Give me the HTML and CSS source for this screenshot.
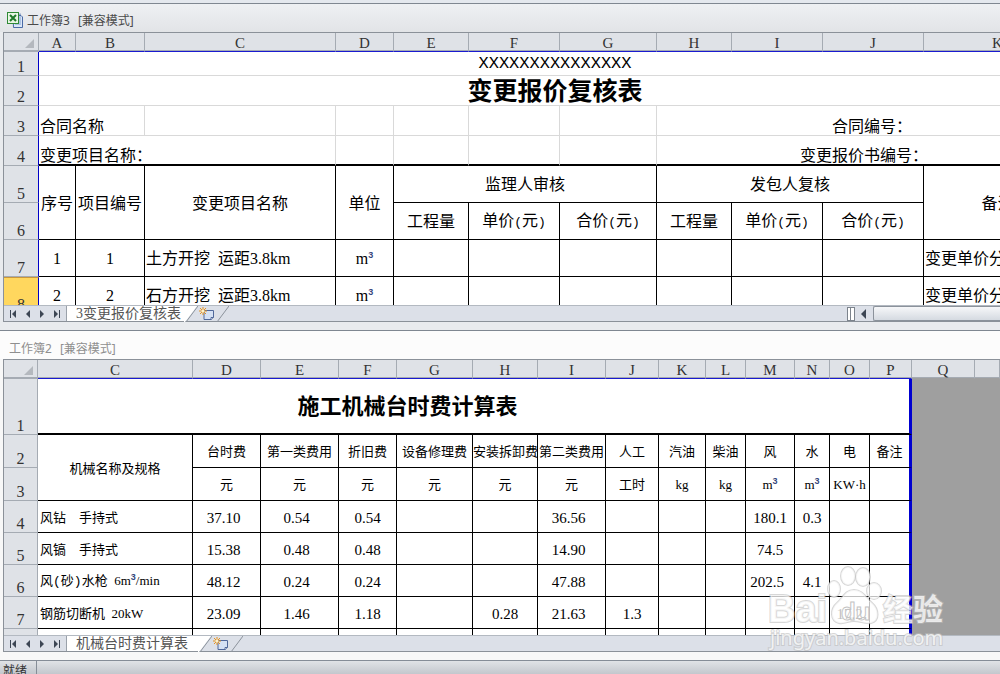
FILE: index.html
```
<!DOCTYPE html>
<html lang="zh-CN">
<head>
    <meta charset="UTF-8">
    <meta name="viewport" content="width=device-width, initial-scale=1.0">
    <title>工作簿3 [兼容模式]</title>
    <link rel="stylesheet" href="styles.css">
</head>
<body>

<section class="workbook active">
    <header class="titlebar">
        <svg class="bookIcon" viewBox="0 0 16 16" width="16" height="16">
            <path d="M6 3.500h8l1.500 1.500v10.500h-9z" fill="#dbe7f8" stroke="#4a6ba6"/>
            <path d="M10 6h4M10 8h4M10 10h4M8 12h6" stroke="#7f9fd0"/>
            <rect x=".5" y=".5" width="11" height="11" fill="#e9f6e4" stroke="#2f8a35"/>
            <path d="M3 3l6 6M9 3l-6 6" stroke="#1f7a2a" stroke-width="2"/>
            <path d="M13 1.500v3" stroke="#4a6ba6"/>
        </svg>
        <span class="bookName">工作簿3</span><span>[兼容模式]</span>
    </header>
    <div class="frame">
        <div class="view">
            <table class="sheet review">
                <colgroup><col><col><col><col><col><col><col><col><col><col><col><col></colgroup>
                <thead>
                    <tr>
                        <th class="corner"><svg viewBox="0 0 9 9" width="9" height="9"><path d="M9 0v9H0z" fill="#b4b8be"/></svg></th>
                        <th>A</th><th>B</th><th>C</th><th>D</th><th>E</th><th>F</th><th>G</th><th>H</th><th>I</th><th>J</th><th>K</th>
                    </tr>
                </thead>
                <tbody>
                    <tr class="plain r24">
                        <th>1</th>
                        <td colspan="11" class="project">XXXXXXXXXXXXXXX</td>
                    </tr>
                    <tr class="plain r30">
                        <th>2</th>
                        <td colspan="11" class="heading">变更报价复核表</td>
                    </tr>
                    <tr class="plain low r30">
                        <th>3</th>
                        <td colspan="2" class="left">合同名称</td><td></td><td></td><td></td><td></td><td></td>
                        <td colspan="4">&emsp;合同编号：</td>
                    </tr>
                    <tr class="plain low last r30">
                        <th>4</th>
                        <td colspan="3" class="left">变更项目名称：</td><td></td><td></td><td></td><td></td>
                        <td colspan="4">变更报价书编号：</td>
                    </tr>
                    <tr class="r37">
                        <th>5</th>
                        <td rowspan="2">序号</td><td rowspan="2">项目编号</td><td rowspan="2">变更项目名称</td><td rowspan="2">单位</td>
                        <td colspan="3">监理人审核</td><td colspan="3">发包人复核</td><td rowspan="2">备注</td>
                    </tr>
                    <tr class="r37">
                        <th>6</th>
                        <td>工程量</td>
                        <td>单价<span class="half">(</span>元<span class="half">)</span></td>
                        <td>合价<span class="half">(</span>元<span class="half">)</span></td>
                        <td>工程量</td>
                        <td>单价<span class="half">(</span>元<span class="half">)</span></td>
                        <td>合价<span class="half">(</span>元<span class="half">)</span></td>
                    </tr>
                    <tr class="r37">
                        <th>7</th>
                        <td>1</td><td>1</td><td class="left">土方开挖&ensp;运距3.8km</td><td>m<sup>3</sup></td>
                        <td></td><td></td><td></td><td></td><td></td><td></td><td class="left">变更单价分析表</td>
                    </tr>
                    <tr class="r37">
                        <th class="current">8</th>
                        <td>2</td><td>2</td><td class="left">石方开挖&ensp;运距3.8km</td><td>m<sup>3</sup></td>
                        <td></td><td></td><td></td><td></td><td></td><td></td><td class="left">变更单价分析表</td>
                    </tr>
                </tbody>
            </table>
        </div>
        <nav class="tabs">
            <div class="arrows">
                <button aria-label="第一张"><svg viewBox="0 0 8 8" width="8" height="8"><path d="M1 0h1v8H1zM7 0v8L3 4z"/></svg></button>
                <button aria-label="上一张"><svg viewBox="0 0 8 8" width="8" height="8"><path d="M6 0v8L2 4z"/></svg></button>
                <button aria-label="下一张"><svg viewBox="0 0 8 8" width="8" height="8"><path d="M2 0v8l4-4z"/></svg></button>
                <button aria-label="最后一张"><svg viewBox="0 0 8 8" width="8" height="8"><path d="M6 0h1v8H6zM1 0v8l4-4z"/></svg></button>
            </div>
            <button class="tab">3变更报价复核表</button>
            <svg class="slant" viewBox="0 0 14 16" width="14" height="16"><path d="M0 0h13L1 16H0z" fill="#fff"/><path d="M14 0L2 16" stroke="#8b929b" fill="none"/></svg>
            <button class="add" aria-label="插入工作表">
                <svg viewBox="0 0 16 14" width="16" height="14"><path d="M5 3.500h9.500v7l-2 2H5z" fill="#d5e1f4" stroke="#50689a"/><path d="M12 12.500v-2h2.500" fill="#fff" stroke="#50689a"/><path d="M4 0v8M0 4h8M1 1l6 6M7 1L1 7" stroke="#e6921e"/><circle cx="4" cy="4" r="1.500" fill="#fff3c8"/></svg>
            </button>
            <svg class="slant" viewBox="0 0 14 16" width="14" height="16"><path d="M14 0L2 16" stroke="#8b929b" fill="none"/></svg>
            <div class="hscroll">
                <span class="split"></span>
                <button class="scrollLeft" aria-label="向左滚动"><svg viewBox="0 0 5 10" width="5" height="10"><path d="M5 0v10L0 5z"/></svg></button>
                <span class="thumb"></span>
            </div>
        </nav>
    </div>
</section>

<section class="workbook inactive">
    <header class="titlebar">
        <span class="bookName">工作簿2</span><span>[兼容模式]</span>
    </header>
    <div class="frame">
        <div class="view">
            <table class="sheet cost">
                <colgroup><col><col><col><col><col><col><col><col><col><col><col><col><col><col><col><col><col></colgroup>
                <thead>
                    <tr>
                        <th class="corner"><svg viewBox="0 0 9 9" width="9" height="9"><path d="M9 0v9H0z" fill="#b4b8be"/></svg></th>
                        <th>C</th><th>D</th><th>E</th><th>F</th><th>G</th><th>H</th><th>I</th><th>J</th><th>K</th><th>L</th><th>M</th><th>N</th><th>O</th><th>P</th>
                        <th class="beyond">Q</th><th class="beyond"></th>
                    </tr>
                </thead>
                <tbody>
                    <tr class="r56">
                        <th>1</th>
                        <td colspan="14" class="heading edge">施工机械台时费计算表</td>
                        <td colspan="2" rowspan="8" class="outside"></td>
                    </tr>
                    <tr class="r33">
                        <th>2</th>
                        <td rowspan="2">机械名称及规格</td><td>台时费</td><td>第一类费用</td><td>折旧费</td><td>设备修理费</td><td>安装拆卸费</td><td>第二类费用</td>
                        <td>人工</td><td>汽油</td><td>柴油</td><td>风</td><td>水</td><td>电</td><td class="edge">备注</td>
                    </tr>
                    <tr class="r33">
                        <th>3</th>
                        <td>元</td><td>元</td><td>元</td><td>元</td><td>元</td><td>元</td>
                        <td>工时</td><td>kg</td><td>kg</td><td>m<sup>3</sup></td><td>m<sup>3</sup></td><td>KW·h</td><td class="edge"></td>
                    </tr>
                    <tr class="r32">
                        <th>4</th>
                        <td class="left">风钻&emsp;手持式</td><td class="num">37.10</td><td class="num">0.54</td><td>0.54</td><td></td><td></td><td class="num">36.56</td>
                        <td></td><td></td><td></td><td>180.1</td><td>0.3</td><td></td><td class="edge"></td>
                    </tr>
                    <tr class="r32">
                        <th>5</th>
                        <td class="left">风镐&emsp;手持式</td><td class="num">15.38</td><td class="num">0.48</td><td>0.48</td><td></td><td></td><td class="num">14.90</td>
                        <td></td><td></td><td></td><td>74.5</td><td></td><td></td><td class="edge"></td>
                    </tr>
                    <tr class="r32">
                        <th>6</th>
                        <td class="left">风<span class="half">(</span>砂<span class="half">)</span>水枪&ensp;6m<sup>3</sup>/min</td><td class="num">48.12</td><td class="num">0.24</td><td>0.24</td><td></td><td></td><td class="num">47.88</td>
                        <td></td><td></td><td></td><td class="num">202.5</td><td>4.1</td><td></td><td class="edge"></td>
                    </tr>
                    <tr class="r32">
                        <th>7</th>
                        <td class="left">钢筋切断机&ensp;20kW</td><td class="num">23.09</td><td class="num">1.46</td><td>1.18</td><td></td><td>0.28</td><td class="num">21.63</td>
                        <td>1.3</td><td></td><td></td><td></td><td></td><td>17.2</td><td class="edge"></td>
                    </tr>
                    <tr class="r32">
                        <th>8</th>
                        <td></td><td></td><td></td><td></td><td></td><td></td><td></td><td></td><td></td><td></td><td></td><td></td><td></td><td class="edge"></td>
                    </tr>
                </tbody>
            </table>
        </div>
        <nav class="tabs">
            <div class="arrows">
                <button aria-label="第一张"><svg viewBox="0 0 8 8" width="8" height="8"><path d="M1 0h1v8H1zM7 0v8L3 4z"/></svg></button>
                <button aria-label="上一张"><svg viewBox="0 0 8 8" width="8" height="8"><path d="M6 0v8L2 4z"/></svg></button>
                <button aria-label="下一张"><svg viewBox="0 0 8 8" width="8" height="8"><path d="M2 0v8l4-4z"/></svg></button>
                <button aria-label="最后一张"><svg viewBox="0 0 8 8" width="8" height="8"><path d="M6 0h1v8H6zM1 0v8l4-4z"/></svg></button>
            </div>
            <button class="tab wide">机械台时费计算表</button>
            <svg class="slant" viewBox="0 0 14 16" width="14" height="16"><path d="M0 0h13L1 16H0z" fill="#fff"/><path d="M14 0L2 16" stroke="#8b929b" fill="none"/></svg>
            <button class="add" aria-label="插入工作表">
                <svg viewBox="0 0 16 14" width="16" height="14"><path d="M5 3.500h9.500v7l-2 2H5z" fill="#d5e1f4" stroke="#50689a"/><path d="M12 12.500v-2h2.500" fill="#fff" stroke="#50689a"/><path d="M4 0v8M0 4h8M1 1l6 6M7 1L1 7" stroke="#e6921e"/><circle cx="4" cy="4" r="1.500" fill="#fff3c8"/></svg>
            </button>
            <svg class="slant" viewBox="0 0 14 16" width="14" height="16"><path d="M14 0L2 16" stroke="#8b929b" fill="none"/></svg>
        </nav>
    </div>
</section>

<footer class="status"><span>就绪</span></footer>

<!-- 水印 -->
<svg class="watermark" viewBox="0 0 184 90" width="184" height="90">
    <g class="mark">
        <ellipse cx="68" cy="25" rx="6" ry="8"/>
        <ellipse cx="82" cy="12" rx="7" ry="9"/>
        <ellipse cx="97" cy="13" rx="7" ry="9"/>
        <ellipse cx="108" cy="27" rx="7" ry="8"/>
        <path d="M88 26c-9 0-11 8-17 13-7 6-7 18 2 20 6 1 9-2 15-2s11 3 17 2c9-2 8-14 1-20-6-5-9-13-18-13z"/>
        <text class="bai" x="2" y="58">Bai</text>
        <text class="cn" x="117" y="56">经验</text>
        <text class="url" x="4" y="81">jingyan.baidu.com</text>
    </g>
    <text class="du" x="75" y="56">du</text>
</svg>

</body>
</html>
```
FILE: styles.css
```
* {
    box-sizing: border-box;
}
body {
    margin: 0;
    padding-top: 3px;
    height: 100vh;
    display: flex;
    flex-direction: column;
    overflow: hidden;
    position: relative;
    background: #e4e8ee;
    font-family: "Liberation Serif", "Noto Sans CJK SC", serif;
    color: #000;
}
button {
    border: none;
    padding: 0;
    background: none;
    font-family: inherit;
    cursor: pointer;
}
svg {
    display: block;
}

/* 工作簿窗口 */
.workbook {
    min-height: 0;
    display: flex;
    flex-direction: column;
    border-top: 1px solid #7f8791;
    padding-bottom: 8px;
}
.active {
    flex: 1 1 327px;
    background: #e9ebee;
}
.inactive {
    flex: 1 1 330px;
    background: #f8f8f8;
}
.titlebar {
    flex: none;
    height: 28px;
    padding: 4px 7px 0;
    display: flex;
    align-items: center;
    gap: 4px;
    font: 12px "Noto Sans", "Noto Sans CJK SC", sans-serif;
    color: #4a4a4a;
}
.active .titlebar {
    background: linear-gradient(#eef0f3, #e2e4e7);
}
.inactive .titlebar {
    background: #fcfcfc;
    padding: 6px 9px 0;
    color: #8f8f8f;
}
.bookName {
    margin-right: 4px;
}
.frame {
    flex: 1;
    min-height: 0;
    margin-left: 3px;
    display: flex;
    flex-direction: column;
    border: 1px solid #8b9199;
    border-right: none;
}
.view {
    flex: 1;
    min-height: 0;
    overflow: hidden;
    background: #fff;
}

/* 表格 */
.sheet {
    width: 100%;
    table-layout: fixed;
    border-spacing: 0;
    font-size: 16px;
    line-height: 20px;
}
.sheet th {
    padding: 0;
    font-weight: normal;
    font-size: 15px;
    line-height: 16px;
    color: #333;
    background: #dfe2e7;
    border-right: 1px solid #a5abb3;
    border-bottom: 1px solid #a5abb3;
}
.sheet thead th {
    height: 19px;
    padding-top: 2px;
    border-bottom-color: #1a1ad0;
    box-shadow: inset 0 -1px #a5abb3;
}
.sheet thead .corner {
    padding: 3px 4px 0 0;
    border-bottom-color: #a5abb3;
}
.corner svg {
    margin-left: auto;
}
.sheet thead .beyond {
    border-bottom-color: #9f9f9f;
}
.sheet tbody th {
    font-size: 16px;
    vertical-align: bottom;
}
.sheet td {
    padding: 2px 0 0;
    text-align: center;
    white-space: nowrap;
    border-right: 1px solid #000;
    border-bottom: 1px solid #000;
}
.sheet .left {
    text-align: left;
    padding-left: 1px;
}
.sheet sup {
    font: bold 9px "Liberation Sans", sans-serif;
    line-height: 0;
    color: #34467c;
}
.half {
    font-family: "Liberation Mono", monospace;
    font-size: 13px;
}
.r24 { height: 24px; }
.r30 { height: 30px; }
.r32 { height: 32px; }
.r33 { height: 33px; }
.r37 { height: 37px; }
.r56 { height: 56px; }

.review {
    min-width: 1068px;
}
.review tbody th {
    border-right-color: #0000c8;
}
.review .plain td {
    border-color: #d9d9d9;
}
.review .low td {
    vertical-align: bottom;
    line-height: 16px;
}
.review .last td {
    border-bottom: 2px solid #000;
}
.review .project {
    font-family: "Liberation Mono", monospace;
    font-size: 17px;
    padding: 0;
}
.review .heading {
    font-size: 25px;
    font-weight: bold;
    line-height: 27px;
}
.review .current {
    background: #ffd75e;
    border-top: 1px solid #c9973b;
}
.review col:nth-child(1) { width: 35px; }
.review col:nth-child(2) { width: 37px; }
.review col:nth-child(3) { width: 69px; }
.review col:nth-child(4) { width: 191px; }
.review col:nth-child(5) { width: 58px; }
.review col:nth-child(6) { width: 75px; }
.review col:nth-child(7) { width: 91px; }
.review col:nth-child(8) { width: 97px; }
.review col:nth-child(9) { width: 75px; }
.review col:nth-child(10) { width: 91px; }
.review col:nth-child(11) { width: 101px; }

.cost {
    font-size: 13px;
}
.cost .r32 td {
    font-size: 15px;
}
.cost .r32 .left {
    font-size: 13px;
    padding-left: 2px;
}
.cost .num {
    padding-right: 6px;
}
/* 标题合并区从左侧隐藏的 A、B 列开始 */
.cost .heading {
    padding-right: 132px;
    font-size: 22px;
    font-weight: bold;
    border-bottom-width: 2px;
}
.cost .edge {
    border-right: 3px solid #0000d0;
}
.cost .outside {
    background: #9f9f9f;
    border: none;
}
.cost col:nth-child(1) { width: 34px; }
.cost col:nth-child(2) { width: 155px; }
.cost col:nth-child(3) { width: 68px; }
.cost col:nth-child(4) { width: 78px; }
.cost col:nth-child(5) { width: 58px; }
.cost col:nth-child(6) { width: 76px; }
.cost col:nth-child(7) { width: 65px; }
.cost col:nth-child(8) { width: 68px; }
.cost col:nth-child(9) { width: 53px; }
.cost col:nth-child(10) { width: 47px; }
.cost col:nth-child(11) { width: 40px; }
.cost col:nth-child(12) { width: 49px; }
.cost col:nth-child(13) { width: 35px; }
.cost col:nth-child(14) { width: 40px; }
.cost col:nth-child(15) { width: 42px; }
.cost col:nth-child(16) { width: 63px; }

/* 工作表标签 */
.tabs {
    flex: none;
    height: 16px;
    display: flex;
    background: #dce0e8;
    border-top: 1px solid #b3b9c1;
}
.arrows {
    width: 63px;
    padding: 0 5px;
    display: flex;
    align-items: center;
    justify-content: space-between;
    border-right: 1px solid #9aa1aa;
}
.arrows button,
.scrollLeft {
    fill: #3d4654;
}
.tab {
    padding: 0 3px 0 9px;
    background: #fff;
    font-size: 14px;
    line-height: 15px;
    color: #555;
}
.tab.wide {
    padding-right: 10px;
}
.slant {
    flex: none;
}
.add {
    width: 17px;
    display: flex;
    align-items: center;
    justify-content: center;
}
.hscroll {
    margin-left: auto;
    width: 153px;
    display: flex;
    align-items: center;
}
.split {
    width: 8px;
    height: 14px;
    border: 1px solid #7c838c;
    background: linear-gradient(90deg, #fff 2px, #7c838c 2px, #7c838c 3px, #fff 3px);
}
.scrollLeft {
    margin: 0 7px 0 6px;
}
.thumb {
    flex: 1;
    height: 15px;
    border: 1px solid #8b929b;
    border-right: none;
    border-radius: 2px 0 0 2px;
    background: linear-gradient(#f6f7f9, #d5dae1);
}

/* 状态栏 */
.status {
    flex: none;
    height: 14px;
    overflow: hidden;
    border-top: 1px solid #858d97;
    background: linear-gradient(#e0e3e6, #c3c7cd);
    font: 12px "Noto Sans CJK SC", sans-serif;
    line-height: 18px;
    color: #333;
}
.status span {
    display: inline-block;
    padding: 0 9px 0 3px;
    border-right: 1px solid #858d97;
}

.watermark {
    position: absolute;
    right: 50px;
    bottom: 20px;
    pointer-events: none;
}
.mark {
    fill: #fff;
    fill-opacity: 0.75;
    stroke: #bdbdbd;
    stroke-opacity: 0.6;
    stroke-width: 2px;
    paint-order: stroke;
}
.bai {
    font: bold 38px "Liberation Sans", sans-serif;
}
.cn {
    font: bold 30px "Noto Sans CJK SC", sans-serif;
}
.url {
    font: 20px "Noto Sans", sans-serif;
}
.du {
    font: bold 24px "Liberation Sans", sans-serif;
    fill: none;
    stroke: #c4c4c4;
}
```
